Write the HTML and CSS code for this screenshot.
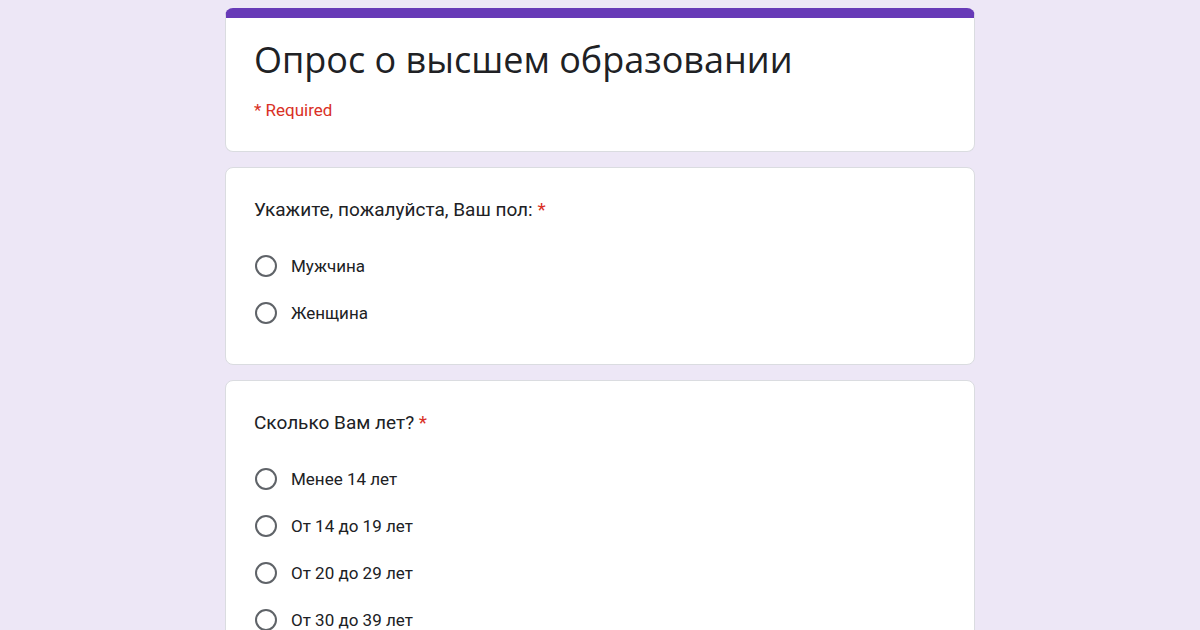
FILE: index.html
```html
<!DOCTYPE html>
<html lang="ru">
<head>
  <meta charset="UTF-8">
  <title>Опрос о высшем образовании</title>
  <link rel="stylesheet" href="styles.css">
</head>
<body>

  <main class="form">
    <section class="card title-card">
      <h1>Опрос о высшем образовании</h1>
      <p class="required-note">* Required</p>
    </section>

    <section class="card question">
      <h2>Укажите, пожалуйста, Ваш пол: <span class="star">*</span></h2>
      <div class="options">
        <label class="option"><span class="radio"></span>Мужчина</label>
        <label class="option"><span class="radio"></span>Женщина</label>
      </div>
    </section>

    <section class="card question">
      <h2>Сколько Вам лет? <span class="star">*</span></h2>
      <div class="options">
        <label class="option"><span class="radio"></span>Менее 14 лет</label>
        <label class="option"><span class="radio"></span>От 14 до 19 лет</label>
        <label class="option"><span class="radio"></span>От 20 до 29 лет</label>
        <label class="option"><span class="radio"></span>От 30 до 39 лет</label>
        <label class="option"><span class="radio"></span>От 40 до 49 лет</label>
      </div>
    </section>
  </main>

</body>
</html>
```

FILE: styles.css
```css
body {
  margin: 0;
  padding: 0;
  background: #ede7f6;
  font-family: Roboto, "Liberation Sans", sans-serif;
  color: #202124;
}
.form {
  width: 750px;
  margin: 8px auto 0;
  display: flex;
  flex-direction: column;
  gap: 15px;
}
.card {
  background: #fff;
  border: 1px solid #dadce0;
  border-radius: 8px;
  padding: 0 28px;
}
.title-card {
  border-top: 10px solid #673ab7;
  padding-top: 20px;
  padding-bottom: 29px;
}
.title-card h1 {
  margin: 0;
  font-family: "Open Sans", Roboto, sans-serif;
  font-weight: 400;
  font-size: 36px;
  line-height: 44px;
  color: #202124;
}
.required-note {
  margin: 16px 0 0;
  font-size: 17px;
  line-height: 24px;
  color: #d93025;
}
.question {
  padding-top: 30px;
  padding-bottom: 28px;
}
.question h2 {
  margin: 0;
  font-size: 19px;
  font-weight: 400;
  line-height: 24px;
  color: #202124;
}
.star {
  color: #d93025;
}
.options {
  margin-top: 20px;
  display: flex;
  flex-direction: column;
}
.option {
  display: flex;
  align-items: center;
  gap: 14px;
  height: 47px;
  font-size: 17px;
  color: #202124;
}
.radio {
  width: 18px;
  height: 18px;
  border: 2px solid #5f6368;
  border-radius: 50%;
  flex-shrink: 0;
  margin-left: 1px;
}
```
